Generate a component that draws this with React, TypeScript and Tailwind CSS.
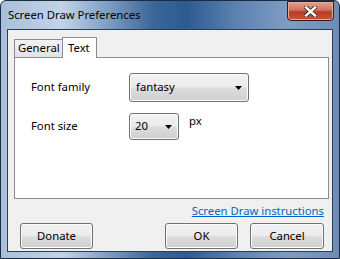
import React from "react";

const font = { fontFamily: '"Segoe UI", "Noto Sans", "Open Sans", sans-serif' };

function Button({ children, w }: { children: React.ReactNode; w: string }) {
  return (
    <div
      className={`${w} h-[26px] rounded-[3px] border border-[#707070] flex items-center justify-center text-[11.3px] text-black bg-[linear-gradient(180deg,#f2f2f2_0%,#ebebeb_48%,#dddddd_52%,#cfcfcf_100%)] shadow-[inset_0_0_0_1px_#fcfcfc]`}
    >
      {children}
    </div>
  );
}

function Caret() {
  return (
    <svg width="7" height="4" viewBox="0 0 7 4">
      <path d="M0 0h7L3.5 4z" fill="#000" />
    </svg>
  );
}

export default function App() {
  return (
    <div
      className="w-[340px] h-[259px] relative overflow-hidden rounded-t-[6px] border border-[#1b2d44] bg-[linear-gradient(90deg,#a9bfd9_0%,#c3d3e6_18%,#7d9cc2_32%,#3a6699_45%,#2d5b91_55%,#5d83b1_70%,#7f9dc2_85%,#6b8db7_100%)] flex flex-col"
      style={font}
    >
      <div className="h-[28px] flex items-center pl-[7px] text-[11.3px] text-black shrink-0">
        Screen Draw Preferences
      </div>
      <div className="absolute top-0 right-[5px] w-[47px] h-[20px] rounded-b-[4px] border border-[#3b1a1a] bg-[linear-gradient(180deg,#e8a292_0%,#d0705d_45%,#b83a24_55%,#c7563b_100%)] flex items-center justify-center shadow-[inset_0_0_0_1px_#e9a99a]">
        <svg width="13" height="11" viewBox="0 0 13 11">
          <path d="M2 1.5L11 9.5M11 1.5L2 9.5" stroke="#3a2a2a" strokeWidth="4" strokeLinecap="square" />
          <path d="M2 1.5L11 9.5M11 1.5L2 9.5" stroke="#ffffff" strokeWidth="2.4" strokeLinecap="square" />
        </svg>
      </div>
      <div className="mx-[6px] mb-[6px] flex-1 border border-[#2c3e55] bg-[#f0f0f0] flex flex-col">
        <div className="flex items-end pl-[6px] h-[27px] shrink-0">
          <div className="w-[48px] h-[18px] pl-[3px] border border-b-0 border-r-0 border-[#898c95] bg-[linear-gradient(180deg,#f2f2f2,#e3e3e3)] text-[11.3px] flex items-center">
            General
          </div>
          <div className="w-[35px] h-[21px] -mb-[1px] pl-[5px] border border-b-0 border-[#898c95] bg-white text-[11.3px] flex items-center relative z-10">
            Text
          </div>
        </div>
        <div className="ml-[6px] mr-[3px] h-[142px] shrink-0 border border-[#898c95] bg-white flex flex-col pt-[15px] pl-[16px]">
          <div className="flex items-center h-[29px]">
            <div className="w-[98px] text-[11.3px]">Font family</div>
            <div className="w-[120px] h-[29px] rounded-[3px] border border-[#707070] bg-[linear-gradient(180deg,#f2f2f2_0%,#ebebeb_48%,#dddddd_52%,#cfcfcf_100%)] shadow-[inset_0_0_0_1px_#fcfcfc] flex items-center justify-between pl-[6px] pr-[6px] text-[11.3px]">
              <span>fantasy</span>
              <Caret />
            </div>
          </div>
          <div className="flex items-start mt-[11px]">
            <div className="w-[98px] text-[11.3px] h-[27px] flex items-center">Font size</div>
            <div className="w-[50px] h-[27px] rounded-[3px] border border-[#707070] bg-[linear-gradient(180deg,#f2f2f2_0%,#ebebeb_48%,#dddddd_52%,#cfcfcf_100%)] shadow-[inset_0_0_0_1px_#fcfcfc] flex items-center justify-between pl-[5px] pr-[6px] text-[11.3px]">
              <span>20</span>
              <Caret />
            </div>
            <div className="ml-[10px] text-[11.3px] leading-[14px] mt-[1px]">px</div>
          </div>
        </div>
        <div className="flex justify-end pr-[8px] mt-[5px] h-[14px] shrink-0">
          <span className="text-[11.3px] text-[#0066cc] underline leading-[14px]">Screen Draw instructions</span>
        </div>
        <div className="flex items-center mt-[5px] pl-[12px] pr-[8px] shrink-0">
          <Button w="w-[73px]">Donate</Button>
          <div className="flex-1" />
          <Button w="w-[73px]">OK</Button>
          <div className="w-[12px]" />
          <Button w="w-[74px]">Cancel</Button>
        </div>
      </div>
    </div>
  );
}
